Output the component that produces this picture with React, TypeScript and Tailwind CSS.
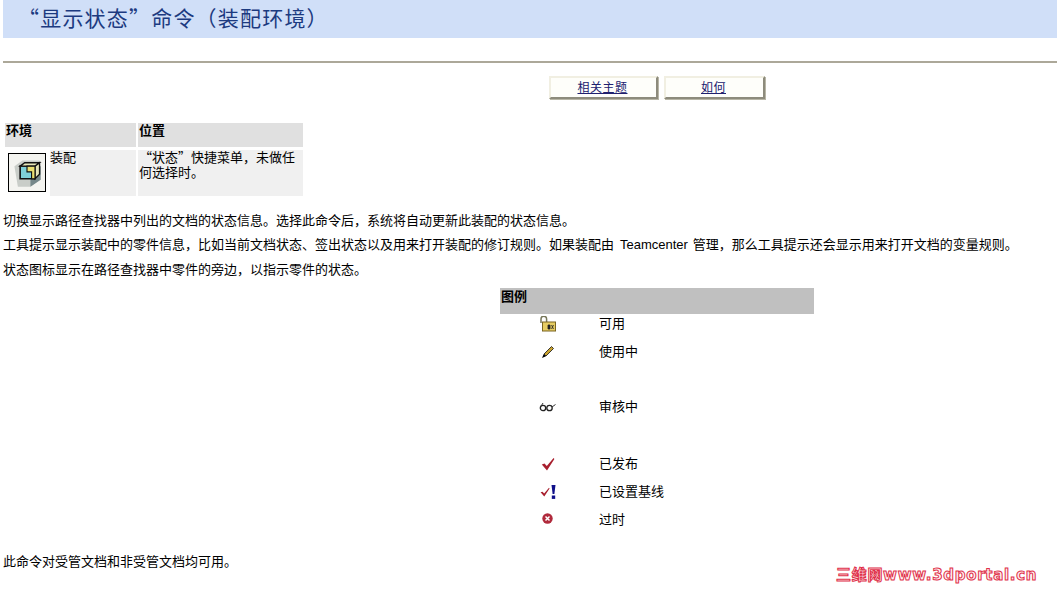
const cjk = "font-['SimSun','Noto_Sans_CJK_SC','Liberation_Sans',sans-serif]";

function LockIcon() {
  return (
    <svg width="18" height="16" viewBox="0 0 18 16">
      <path d="M2 7V3a2.8 2.8 0 0 1 5.6 0V6" fill="none" stroke="#77775a" strokeWidth="1.5" />
      <rect x="3.5" y="6" width="13" height="9" fill="#e6cc62" stroke="#7a6520" />
      <path d="M9 9h2v4H9zM12.5 9l2 4M14.5 9l-2 4" stroke="#222" strokeWidth="0.8" fill="#222" />
    </svg>
  );
}

function PencilIcon() {
  return (
    <svg width="14" height="14" viewBox="0 0 14 14">
      <path d="M3 9 10.5 1.5l2 2L5 11z" fill="#c9a22e" stroke="#111" strokeWidth="0.8" />
      <path d="M1 13l1.7-4 2.3 2.3z" fill="#000" />
    </svg>
  );
}

function GlassesIcon() {
  return (
    <svg width="18" height="10" viewBox="0 0 18 10">
      <circle cx="4" cy="6" r="2.7" fill="none" stroke="#222" strokeWidth="1.3" />
      <circle cx="10.5" cy="6" r="2.7" fill="none" stroke="#222" strokeWidth="1.3" />
      <path d="M1.5 5 4 1M13 5 16.5 2.5" fill="none" stroke="#333" strokeWidth="1" />
    </svg>
  );
}

function CheckIcon({ size = 14 }: { size?: number }) {
  return (
    <svg width={size} height={size} viewBox="0 0 14 14">
      <path d="M0.8 7.5 3.5 6.5 5.8 9 12.6 1 13.4 2 6 13.4z" fill="#a81f2e" />
    </svg>
  );
}

function BaselineIcon() {
  return (
    <span className="flex items-center gap-[1px]">
      <CheckIcon size={10} />
      <svg width="5" height="14" viewBox="0 0 5 14">
        <path d="M0.5 0h4L3.4 9H1.6z" fill="#10108a" />
        <rect x="0.8" y="10.5" width="3.4" height="3.4" fill="#10108a" />
      </svg>
    </span>
  );
}

function ObsoleteIcon() {
  return (
    <svg className="mr-[2px] mb-[3px]" width="11" height="11" viewBox="0 0 11 11">
      <circle cx="5.5" cy="5.5" r="5.2" fill="#b02a3c" />
      <path d="M3.5 3.5l4 4M7.5 3.5l-4 4" stroke="#fff" strokeWidth="1.5" />
    </svg>
  );
}

function AssemblyIcon() {
  return (
    <div className="flex h-[39px] w-[38px] items-center justify-center border border-black bg-[#f4f4f0]">
      <svg width="32" height="32" viewBox="0 0 28 28">
        <path d="M3 8 10 3h15v17l-8 6H6z" fill="#c9cdc8" />
        <path d="M21 8h5v12l-9 6v-8z" fill="#76888a" />
        <path d="M8 8h13v11H8z" fill="#7fd0d8" stroke="#111" strokeWidth="1.4" />
        <path d="M8 8l4-3h13l-4 3zM21 8l4-3v10l-4 4z" fill="#e7e6b8" stroke="#111" strokeWidth="1.2" />
        <path d="M14 8h7v11h-3v-6h-4z" fill="#eadf70" stroke="#111" strokeWidth="1" />
      </svg>
    </div>
  );
}

function NavButton({ label, width }: { label: string; width: string }) {
  return (
    <a className={`${width} flex h-[23px] items-center justify-center border-2 border-[#f1efe2] border-r-[#8d8b7c] border-b-[#8d8b7c] bg-[#fefefa] pr-[2px] pb-[2px] text-[12px] leading-none tracking-[0.5px] text-[#20206e] underline shadow-[1px_1px_0_#b8b6a6]`}>
      {label}
    </a>
  );
}

const legend = [
  { label: "可用", icon: <LockIcon />, rowClass: "h-[20px]" },
  { label: "使用中", icon: <PencilIcon />, rowClass: "mt-[4px] h-[28px]" },
  { label: "审核中", icon: <GlassesIcon />, rowClass: "mt-[27px] h-[28px]" },
  { label: "已发布", icon: <CheckIcon />, rowClass: "mt-[29px] h-[28px]" },
  { label: "已设置基线", icon: <BaselineIcon />, rowClass: "h-[28px]" },
  { label: "过时", icon: <ObsoleteIcon />, rowClass: "h-[28px]" },
];

export default function App() {
  return (
    <div className={`relative h-[589px] w-[1057px] overflow-hidden bg-white text-[13px] leading-[16px] text-black ${cjk}`}>
      <div className="ml-[3px] flex h-[38px] items-center bg-[#d0dff8] pb-[5px] pl-[15px]">
        <h1 className="text-[21px] leading-[24px] tracking-[1.2px] text-[#1c3a80]">“显示状态”命令（装配环境）</h1>
      </div>

      <div className="mt-[23px] ml-[3px] h-[2px] bg-[#aca899]" />

      <div className="mt-[13px] ml-[549px] flex gap-[6px]">
        <NavButton label="相关主题" width="w-[109px]" />
        <NavButton label="如何" width="w-[101px]" />
      </div>

      <div className="mt-[24px] ml-[5px] grid w-[298px] grid-cols-[131px_165px] gap-x-[2px] gap-y-[3px] leading-[15px]">
        <div className="h-[24px] bg-[#e0e0e0] pl-[1px] leading-[13px] font-bold">环境</div>
        <div className="h-[24px] bg-[#e0e0e0] pl-[1px] leading-[13px] font-bold">位置</div>
        <div className="flex h-[46px] bg-[#f0f0f0]">
          <div className="h-full bg-white p-[3px] pr-[4px]">
            <AssemblyIcon />
          </div>
          <span className="-mt-[1px]">装配</span>
        </div>
        <div className="h-[46px] bg-[#f0f0f0] pl-[1px]">
          <p className="-mt-[1px]">“状态”快捷菜单，未做任何选择时。</p>
        </div>
      </div>

      <div className="mt-[16px] ml-[3px] flex flex-col gap-[8px] whitespace-nowrap">
        <p>切换显示路径查找器中列出的文档的状态信息。选择此命令后，系统将自动更新此装配的状态信息。</p>
        <p>
          工具提示显示装配中的零件信息，比如当前文档状态、签出状态以及用来打开装配的修订规则。如果装配由&nbsp;
          <span className="mr-[2px] ml-[3px] font-['Liberation_Sans',sans-serif]">Teamcenter</span> 管理，那么工具提示还会显示用来打开文档的变量规则。
        </p>
        <p>状态图标显示在路径查找器中零件的旁边，以指示零件的状态。</p>
      </div>

      <div className="mt-[11px] ml-[500px] w-[314px]">
        <div className="h-[26px] bg-[#c0c0c0] pl-[1px] leading-[15px] font-bold">图例</div>
        {legend.map((row) => (
          <div key={row.label} className={`flex items-center ${row.rowClass}`}>
            <div className="flex w-[96px] justify-center">{row.icon}</div>
            <span className="mb-[2px] ml-[3px]">{row.label}</span>
          </div>
        ))}
      </div>

      <p className="mt-[19px] ml-[3px]">此命令对受管文档和非受管文档均可用。</p>

      <div className="absolute top-[566px] left-[836px] font-['DejaVu_Sans','Noto_Sans_CJK_SC',sans-serif] text-[15px] leading-[18px] font-bold tracking-[0.7px] whitespace-nowrap text-[#fff0f0] [-webkit-text-stroke:1px_#e0304a]">
        三维网www.3dportal.cn
      </div>
    </div>
  );
}
